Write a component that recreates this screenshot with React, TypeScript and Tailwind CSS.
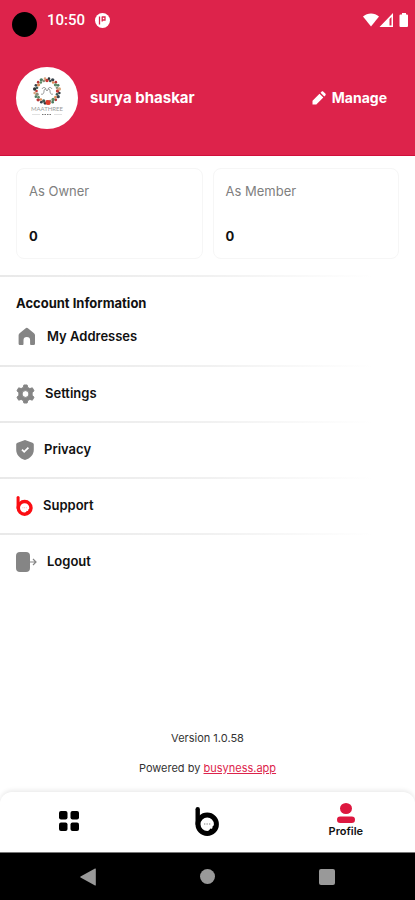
import React from 'react';

const BrandLogo = ({ className }: { className?: string }) => (
  <svg viewBox="0 0 24 29" className={className} fill="none" aria-hidden="true">
    <path d="M2.7 2.2V17" stroke="currentColor" strokeWidth="4.4" strokeLinecap="round" />
    <circle cx="12.2" cy="17.2" r="9.2" stroke="currentColor" strokeWidth="5" />
    <path d="M13 24.500h6v-6l-1.500 1v2.500l-2-.5z" fill="currentColor" />
    <path d="M9 17h1.300M11.500 17h1.300M14 17h1.300" stroke="currentColor" strokeWidth="1" opacity="0.5" />
  </svg>
);

const HomeIcon = () => (
  <svg viewBox="0 0 21 20" className="h-5 w-[21px]" fill="#858585" aria-hidden="true">
    <path d="M9.4 1.400a2.200 2.200 0 0 1 2.800 0l5.800 4.800c.7.5 1 1.200 1 2v8.300c0 1-.7 1.600-1.600 1.600h-2.100c-.7 0-1.200-.5-1.200-1.200v-3.600a3.300 3.300 0 0 0-6.600 0v3.600c0 .7-.5 1.200-1.200 1.200H4.200c-1 0-1.600-.7-1.600-1.600V8.200c0-.8.3-1.500 1-2z" />
  </svg>
);

const GearIcon = () => (
  <svg viewBox="2 2 20 20" className="h-5 w-[19px]" fill="#858585" aria-hidden="true">
    <path
      fillRule="evenodd"
      d="M10.300 2.500h3.400l.7 2.600 2.200 1.200 2.600-.8 1.800 3.100-2 2v2.800l2 2-1.800 3.100-2.600-.8-2.200 1.200-.7 2.600h-3.400l-.7-2.600-2.200-1.200-2.600.8L3 15.400l2-2v-2.800l-2-2 1.800-3.100 2.600.8 2.200-1.200zM12 8.400a3.600 3.600 0 1 0 0 7.200 3.600 3.600 0 0 0 0-7.200z"
      stroke="#858585"
      strokeLinejoin="round"
    />
  </svg>
);

const ShieldIcon = () => (
  <svg viewBox="0 0 18 20" className="h-5 w-[18px]" aria-hidden="true">
    <path d="M9 0l7.400 2.700c.8.300 1.400 1 1.400 1.900V9.500c0 5.200-3.300 8.900-8.800 10.500C3.500 18.400.2 14.700.2 9.500V4.600c0-.9.500-1.600 1.400-1.900z" fill="#858585" />
    <path d="M6 9.700l2.200 2.200L12.400 7.600" stroke="#fff" strokeWidth="1.700" fill="none" />
  </svg>
);

const LogoutIcon = () => (
  <svg viewBox="0 0 21 20" className="h-5 w-[21px]" aria-hidden="true">
    <rect x="0" y="0" width="14" height="20" rx="4" fill="#858585" />
    <path d="M14 10h6M17 7l3 3-3 3" stroke="#858585" strokeWidth="1.200" fill="none" />
  </svg>
);

const menus = [
  { label: 'Settings', icon: <GearIcon /> },
  { label: 'Privacy', icon: <ShieldIcon /> },
  { label: 'Support', icon: <BrandLogo className="h-5 w-[17px] text-[#fb0d12]" /> },
  { label: 'Logout', icon: <LogoutIcon /> }
];

const counts = [
  { label: 'As Owner', value: 0 },
  { label: 'As Member', value: 0 }
];

// bead colors of the wreath in the avatar
const beads = ['#c43a35', '#39424b', '#5f8a65', '#d9a27c', '#3d5950', '#b53636', '#8a8f77', '#2f3438', '#dc8b55', '#4c7c60'];

const Avatar = () => (
  <div className="h-[62px] w-[62px] shrink-0 overflow-hidden rounded-full bg-white">
    <svg viewBox="0 0 62 62" className="h-full w-full" role="img" aria-label="Profile picture">
      {Array.from({ length: 40 }, (_, i) => {
        const angle = (i * Math.PI) / 20;
        const radius = i % 2 ? 12.5 : 10.5;
        return (
          <circle
            key={i}
            cx={31 + radius * Math.cos(angle)}
            cy={24 + radius * Math.sin(angle)}
            r={i % 3 ? 1.3 : 1.7}
            fill={beads[(i * 7) % beads.length]}
          />
        );
      })}
      <circle cx="32" cy="35.500" r="2.500" fill="#dc3b2b" />
      <path
        d="M25 27c2 1 3-1 3-3s2-3 3 0c1-3 3-2 3 0s1 4 3 3M26 22c1-2 3-2 4 0M32 22c1-2 3-2 4 0"
        fill="none"
        stroke="#777"
        strokeWidth="0.8"
      />
      <text x="31" y="44" textAnchor="middle" fontSize="6" fill="#9a9a9a" fontFamily="Lato, sans-serif">
        MAATHREE
      </text>
      <path d="M16 47.500h8M38 47.500h8" stroke="#ccc" strokeWidth="0.6" />
      <path d="M26 47.500h10" stroke="#777" strokeWidth="1.200" strokeDasharray="1.500 1" />
    </svg>
  </div>
);

const Divider = () => <div className="h-0.5 bg-linear-to-r from-[#e9e9e9] via-[#f1f1f1] via-50% to-white to-90%" />;

const StatusBar = () => (
  <div className="flex h-10 items-center pr-1.5 pl-3 text-white">
    <span className="mt-2 h-[25px] w-[25px] rounded-full bg-black" />
    <span className="ml-2.5 font-[Roboto] text-[15px] font-medium">10:50</span>
    <svg viewBox="0 0 15 15" className="ml-2.5 h-[15px] w-[15px]" aria-hidden="true">
      <circle cx="7.500" cy="7.500" r="7.500" fill="#fff" />
      <path d="M4.500 3.500v8M7.200 3.500v5M7 4h3v3H7" stroke="#dd234b" strokeWidth="1.300" fill="none" />
    </svg>
    <svg viewBox="0 0 46 14" className="ml-auto h-3.5 w-[46px]" fill="currentColor" aria-hidden="true">
      <path d="M0 3.500C4.500-.5 11.500-.5 16 3.500L8 13.500z" />
      <path fillRule="evenodd" d="M30 0v14H16.500zM26.500 6v6.500h2V4z" />
      <path d="M39 0h4v1.500h1q1 0 1 1V13q0 1-1 1h-6.500q-1 0-1-1V2.500q0-1 1-1H39z" />
    </svg>
  </div>
);

const App = () => {
  return (
    <div className="flex min-h-screen flex-col bg-white font-[Inter,sans-serif] text-[#111]">
      <header className="border-b border-[#d00f3b] bg-[#dd234b] pb-[26px]">
        <StatusBar />
        <div className="mt-[27px] flex items-center px-4 text-white">
          <Avatar />
          <h1 className="ml-3 text-[15px] font-bold">surya bhaskar</h1>
          <button type="button" className="mr-3 ml-auto flex items-center gap-1.5 text-sm font-bold">
            <svg viewBox="0 0 14 14" className="h-3.5 w-3.5" fill="currentColor" aria-hidden="true">
              <path d="M.5 9.700L7.500 2.700 11.300 6.500l-7 7H.5zM8.500 1.700l1-1c.6-.6 1.300-.6 1.900 0l1.900 1.900c.6.600.6 1.300 0 1.900l-1 1z" />
            </svg>
            Manage
          </button>
        </div>
      </header>

      <main className="flex flex-1 flex-col">
        <section className="mt-3 mb-4 grid grid-cols-2 gap-2.5 px-4">
          {counts.map(({ label, value }) => (
            <div key={label} className="flex h-[91px] flex-col justify-between rounded-lg border border-[#f6f6f6] px-3 pt-2.5 pb-3">
              <p className="text-[13px] leading-6 text-[#808080]">{label}</p>
              <p className="text-[13px] leading-5 font-bold">{value}</p>
            </div>
          ))}
        </section>
        <Divider />

        <section className="pt-3.5">
          <h2 className="mb-0.5 px-4 text-[13px] leading-6 font-bold">Account Information</h2>
          <button type="button" className="mb-2 flex h-10 w-full items-center gap-2.5 px-4 text-[13px] font-semibold">
            <HomeIcon />
            My Addresses
          </button>
          {menus.map(({ label, icon }) => (
            <React.Fragment key={label}>
              <Divider />
              <button type="button" className="flex h-[54px] w-full items-center gap-2.5 px-4 text-[13px] font-semibold">
                {icon}
                {label}
              </button>
            </React.Fragment>
          ))}
        </section>

        <div className="mt-auto mb-3.5 flex flex-col gap-2.5 text-center text-[11px] leading-5 text-[#333]">
          <p>Version 1.0.58</p>
          <p>
            Powered by{' '}
            <a href="#busyness" className="text-[#dd234b] underline">
              busyness.app
            </a>
          </p>
        </div>
      </main>

      <nav className="grid h-[60px] grid-cols-3 items-center rounded-t-xl bg-white pb-0.5 shadow-[0_-2px_4px_rgba(0,0,0,0.08)]">
        <button type="button" aria-label="Dashboard" className="flex justify-center">
          <svg viewBox="0 0 20 20" className="h-5 w-5" aria-hidden="true">
            <rect width="8.500" height="8.500" rx="2" />
            <rect x="11.500" width="8.500" height="8.500" rx="2" />
            <rect y="11.500" width="8.500" height="8.500" rx="2" />
            <rect x="11.500" y="11.500" width="8.500" height="8.500" rx="2" />
          </svg>
        </button>
        <button type="button" aria-label="Home" className="flex justify-center">
          <BrandLogo className="h-[29px] w-6 text-black" />
        </button>
        <button type="button" className="flex flex-col items-center text-[11px] leading-4 font-semibold">
          <svg viewBox="0 0 18 20" className="h-5 w-[18px]" fill="#dd173f" aria-hidden="true">
            <ellipse cx="9" cy="5.500" rx="6" ry="5.500" />
            <rect y="13.500" width="18" height="6.500" rx="3.250" />
          </svg>
          Profile
        </button>
      </nav>

      <div className="flex h-12 items-center justify-around border-t border-[#777] bg-black px-7">
        <button type="button" aria-label="Back">
          <svg viewBox="0 0 16 18" className="h-[18px] w-4" fill="#999" aria-hidden="true">
            <path d="M15 .5q.8-.3.8.600V17q0 .8-.8.400L.5 9.600Q0 9 .5 8.500z" />
          </svg>
        </button>
        <button type="button" aria-label="Home screen" className="h-[15px] w-[15px] rounded-full bg-[#999]" />
        <button type="button" aria-label="Recent apps" className="h-4 w-4 rounded-xs bg-[#999]" />
      </div>
    </div>
  );
};

export default App;
